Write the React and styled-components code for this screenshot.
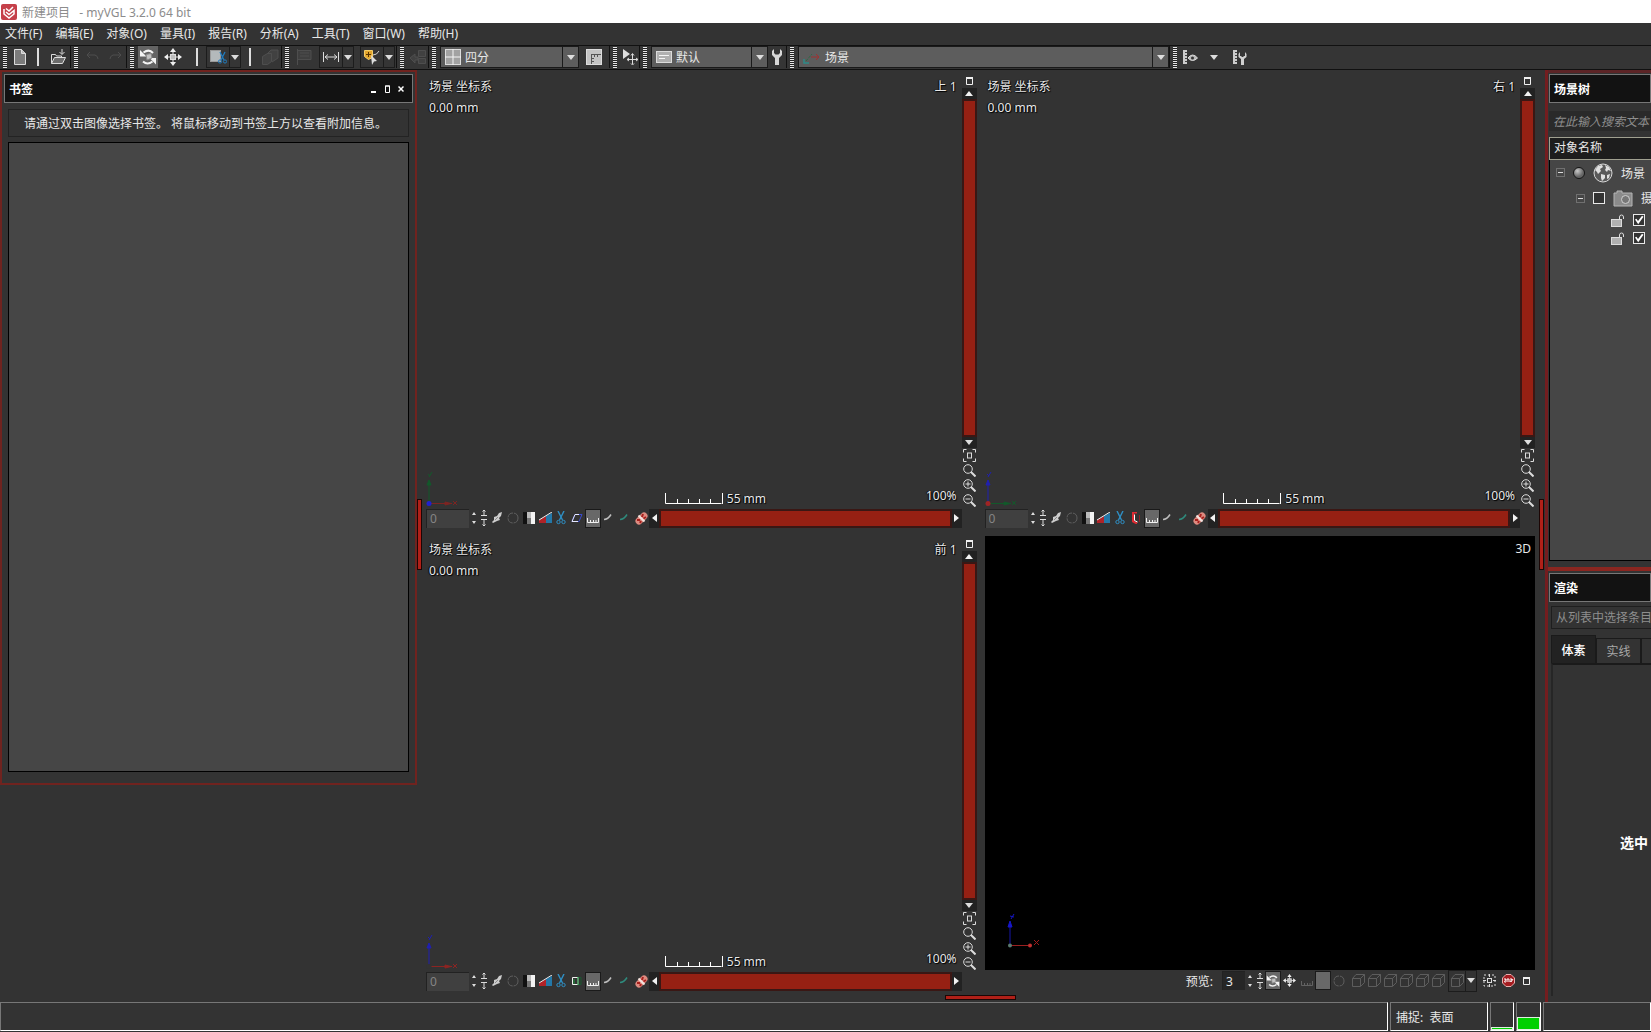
import React from "react";
import styled, { createGlobalStyle } from "styled-components";

const GlobalStyle = createGlobalStyle`
  * {
    box-sizing: border-box;
  }
  body {
    margin: 0;
    background: #333333;
  }
  body, button, input, select {
    font-family: "Noto Sans", "Noto Sans CJK SC", sans-serif;
    font-size: 12px;
    color: #e8e8e8;
  }
  button {
    padding: 0;
    border: 0;
    background: none;
  }
`;

const Page = styled.div`
  height: 100vh;
  display: flex;
  flex-direction: column;
  overflow: hidden;
`;
const TitleBar = styled.header`
  flex: none;
  height: 23px;
  padding-left: 1px;
  display: flex;
  align-items: center;
  gap: 5px;
  background: #ffffff;
  color: #8c8c8c;
  white-space: pre;
`;
const MenuBar = styled.nav`
  flex: none;
  height: 22px;
  padding-left: 5px;
  display: flex;
  align-items: center;
  gap: 13px;
`;
const MenuItem = styled.button`
  line-height: 20px;
`;

/* toolbar */
const ToolBar = styled.div`
  flex: none;
  height: 25px;
  padding-bottom: 1px;
  display: flex;
  border-top: 1px solid #111111;
  border-bottom: 1px solid #111111;
  background: #353535;
`;
const ToolGroup = styled.div`
  display: flex;
  align-items: center;
  padding-right: ${(props) => props.$end || 0}px;
  border-right: ${(props) => (props.$last ? "0" : "1px solid #111111")};
`;
const Grip = styled.span`
  width: 4px;
  height: 21px;
  margin: 0 4px 0 3px;
  background: repeating-linear-gradient(#e6e6e6 0 1px, #222222 1px 2px);
`;
const Separator = styled.span`
  width: 2px;
  height: 18px;
  margin: 0 8px;
  background: #dddddd;
`;
const ToolButton = styled.button`
  width: ${(props) => props.$w || 22}px;
  height: 22px;
  display: flex;
  align-items: center;
  justify-content: center;
  background: ${(props) => (props.$on ? "#646464" : "none")};
  opacity: ${(props) => (props.$dim ? 0.15 : 1)};
`;
const Split = styled.div`
  display: flex;
  margin-left: ${(props) => props.$gap || 0}px;
  border: 1px solid #1c1c1c;
  button + button {
    border-left: 1px solid #1c1c1c;
  }
  button {
    height: 20px;
  }
`;
const ComboBox = styled.label`
  width: ${(props) => props.$w}px;
  height: 22px;
  display: flex;
  align-items: center;
  gap: 4px;
  padding-left: 4px;
  border: 1px solid #1a1a1a;
  background: #5d5d5d;
`;
const ComboSelect = styled.select`
  flex: 1;
  min-width: 0;
  height: 20px;
  padding: 0;
  border: 0;
  outline: 0;
  appearance: none;
  background: none;
`;
const ComboArrow = styled.span`
  width: 16px;
  height: 20px;
  display: flex;
  align-items: center;
  justify-content: center;
  border-left: 1px solid #1a1a1a;
`;

/* docks */
const Body = styled.main`
  flex: 1;
  min-height: 0;
  display: flex;
`;
const LeftDock = styled.aside`
  flex: none;
  width: 417px;
  display: flex;
  flex-direction: column;
`;
const BookmarkPanel = styled.section`
  flex: 0 1 715px;
  min-height: 0;
  padding: 2px;
  display: flex;
  flex-direction: column;
  border: 2px solid #70231f;
`;
const PanelTitle = styled.h2`
  flex: none;
  height: 29px;
  margin: 0;
  padding: 0 4px;
  display: flex;
  align-items: center;
  justify-content: space-between;
  border: 1px solid #777777;
  background: #121212;
  font-size: 12px;
  font-weight: 700;
  color: #ffffff;
  white-space: nowrap;
`;
const PanelButtons = styled.span`
  display: flex;
  margin-bottom: 4px;
  button {
    width: 14px;
    height: 14px;
  }
`;
const Message = styled.p`
  flex: none;
  height: 28px;
  margin: 6px 4px 5px;
  padding-left: 15px;
  border: 1px solid #232323;
  line-height: 28px;
  white-space: pre;
`;
const BookmarkList = styled.div`
  flex: 1;
  margin: 0 4px 9px;
  border: 1px solid #000000;
  background: #464646;
`;
const RightDock = styled.aside`
  flex: none;
  width: 106px;
  display: flex;
  flex-direction: column;
  overflow: hidden;
  border-left: 3px solid #741d1f;
  white-space: nowrap;
`;
const TreePanel = styled.section`
  flex: 0 1 497px;
  padding: 1px 0 0 1px;
  display: flex;
  flex-direction: column;
  border-top: 3px solid #5c2426;
`;
const SearchInput = styled.input`
  flex: none;
  width: 140px;
  height: 20px;
  margin: 8px 0 6px;
  padding: 0 4px;
  border: 0;
  background: #2a2a2a;
  font-style: italic;
  &::placeholder {
    color: #8e8e8e;
  }
`;
const TreeHeader = styled.div`
  flex: none;
  height: 23px;
  padding-left: 4px;
  border: 1px solid #a0a090;
  border-right: 0;
  background: #1d1d1d;
  line-height: 20px;
`;
const Tree = styled.ul`
  flex: 1;
  margin: 0 0 6px;
  padding: 0;
  list-style: none;
  border-left: 1px solid #000000;
  border-bottom: 1px solid #000000;
  background: #464646;
`;
const TreeRow = styled.li`
  height: ${(props) => props.$h}px;
  padding-left: ${(props) => props.$indent}px;
  display: flex;
  align-items: center;
  gap: 8px;
  svg {
    flex: none;
  }
`;
const Expander = styled.button`
  flex: none;
  width: 9px;
  height: 9px;
  border: 1px solid #707070;
  background: linear-gradient(#dddddd, #dddddd) center / 5px 1px no-repeat;
`;
const TreeCheck = styled.input`
  flex: none;
  width: 12px;
  height: 12px;
  margin: 0;
  appearance: none;
  border: 1px solid #e8e8e8;
  background: #333333;
  &:checked::before {
    content: "";
    display: block;
    width: 10px;
    height: 10px;
    background: #ffffff;
    clip-path: polygon(10% 45%, 25% 38%, 40% 60%, 80% 8%, 95% 18%, 42% 92%);
  }
`;
const Orb = styled.span`
  flex: none;
  width: 12px;
  height: 12px;
  border: 1px solid #161616;
  border-radius: 50%;
  background: radial-gradient(circle at 35% 30%, #c8c8c8, #666666 60%);
`;
const RenderPanel = styled.section`
  flex: 1;
  padding: 2px 0 0 1px;
  display: flex;
  flex-direction: column;
  border-top: 4px solid #8a2620;
`;
const RenderInput = styled.input`
  flex: none;
  width: 140px;
  height: 23px;
  margin: 4px 0 6px 2px;
  padding: 0 4px;
  border: 1px solid #1e1e1e;
  background: #333333;
  &::placeholder {
    color: #8e8e8e;
  }
`;
const Tabs = styled.div`
  flex: none;
  height: 28px;
  margin-left: 2px;
  display: flex;
  align-items: flex-end;
`;
const Tab = styled.button`
  flex: none;
  width: 45px;
  height: ${(props) => (props.$active ? 28 : 25)}px;
  border: 1px solid #1a1a1a;
  border-bottom: 0;
  background: ${(props) => (props.$active ? "#222222" : "#333333")};
  color: ${(props) => (props.$active ? "#ffffff" : "#a8a8a8")};
  font-weight: ${(props) => (props.$active ? 500 : 400)};
`;
const TabPage = styled.div`
  flex: 1;
  margin: 0 0 6px 2px;
  padding: 167px 0 0 67px;
  border-top: 2px solid #1a1a1a;
  border-left: 2px solid #262626;
  font-size: 14px;
  font-weight: 700;
  color: #ffffff;
`;

/* splitters */
const Splitter = styled.div`
  flex: none;
  width: ${(props) => props.$w}px;
  padding: 0 ${(props) => props.$right || 0}px 4px 0;
  display: flex;
  align-items: center;
  justify-content: flex-end;
`;
const Handle = styled.span`
  width: 5px;
  height: 71px;
  border: 1px solid #1c0605;
  background: #b02018;
`;
const BottomSplitter = styled.div`
  flex: none;
  height: 7px;
  display: flex;
  justify-content: center;
  span {
    width: 71px;
    height: 5px;
    border: 1px solid #1c0605;
    background: #b02018;
  }
`;

/* viewports */
const Center = styled.div`
  flex: 1;
  min-width: 0;
  padding-top: 3px;
  display: flex;
  flex-direction: column;
`;
const Views = styled.div`
  flex: 1;
  min-height: 0;
  display: grid;
  grid-template-columns: 1fr 1fr;
  grid-template-rows: 1fr 1fr;
  gap: 4px 8px;
`;
const ViewBox = styled.section`
  min-width: 0;
  min-height: 0;
  padding-bottom: 4px;
  display: flex;
  flex-direction: column;
`;
const ViewMain = styled.div`
  flex: 1;
  min-height: 0;
  display: flex;
`;
const Canvas = styled.div`
  flex: 1;
  min-width: 0;
  padding: 3px 5px 0 3px;
  display: flex;
  flex-direction: column;
  justify-content: space-between;
  line-height: 21px;
  text-shadow: 1px 1px 1px #000000, -1px 0 1px #000000;
`;
const LabelRow = styled.div`
  display: flex;
  justify-content: space-between;
`;
const ScaleRow = styled.div`
  display: grid;
  grid-template-columns: 4fr 5fr;
  align-items: end;
  margin-left: -3px;
`;
const ScaleInfo = styled.div`
  padding-left: 3px;
  display: flex;
  align-items: flex-end;
  justify-content: space-between;
  line-height: 18px;
  span {
    display: flex;
    align-items: center;
    gap: 4px;
  }
  output {
    margin-bottom: 3px;
  }
`;
const SideBar = styled.div`
  flex: none;
  width: 15px;
  display: flex;
  flex-direction: column;
`;
const SideButton = styled.button`
  flex: none;
  height: 15px;
  display: flex;
  align-items: center;
  justify-content: center;
`;
const ScrollArrow = styled.button`
  flex: none;
  width: ${(props) => (props.$v ? 15 : 10)}px;
  height: ${(props) => (props.$v ? 11 : 19)}px;
  display: flex;
  align-items: center;
  justify-content: center;
  background: #222222;
`;
const ScrollTrack = styled.div`
  flex: 1;
  padding: 2px;
  display: flex;
  background: #3a1714;
`;
const ScrollThumb = styled.div`
  flex: 1;
  background: #962013;
`;
const ViewTools = styled.div`
  flex: none;
  height: 20px;
  margin-right: 15px;
  display: flex;
  align-items: center;
  ${ScrollTrack} {
    height: 19px;
  }
`;
const SliceInput = styled.input`
  width: ${(props) => props.$w}px;
  height: 19px;
  padding: 0 3px;
  border: 0;
  border-top: 1px solid #222222;
  border-left: 1px solid #222222;
  background: ${(props) => (props.$dark ? "#262626" : "#404040")};
  color: ${(props) => (props.$dark ? "#e8e8e8" : "#858585")};
`;
const MiniButton = styled.button`
  flex: none;
  width: ${(props) => props.$w || 16}px;
  height: 19px;
  margin-left: ${(props) => props.$gap || 0}px;
  display: flex;
  align-items: center;
  justify-content: center;
  border: ${(props) => (props.$on ? "1px solid #1a1a1a" : "0")};
  background: ${(props) => (props.$on ? "#686868" : "none")};
  opacity: ${(props) => (props.$dim ? 0.25 : 1)};
`;
const View3D = styled.div`
  flex: 1;
  min-height: 0;
  padding: 2px 4px 14px 20px;
  display: flex;
  flex-direction: column;
  justify-content: space-between;
  background: #000000;
  line-height: 21px;
  text-align: right;
`;
const ViewTools3D = styled.div`
  flex: none;
  height: 21px;
  display: flex;
  align-items: center;
  justify-content: flex-end;
  label {
    margin-right: 9px;
  }
`;

/* status bar */
const StatusBar = styled.footer`
  flex: none;
  height: 30px;
  padding-bottom: 1px;
  display: flex;
  gap: 2px;
`;
const StatusCell = styled.div`
  flex: ${(props) => (props.$w ? "none" : 1)};
  width: ${(props) => (props.$w ? props.$w + "px" : "auto")};
  padding-left: ${(props) => (props.$text ? 5 : 0)}px;
  display: flex;
  align-items: ${(props) => (props.$text ? "center" : "flex-end")};
  border: 1px solid #777777;
  border-right: 1px solid #ffffff;
  border-bottom: 1px solid #ffffff;
  white-space: pre;
`;
const Meter = styled.div`
  flex: 1;
  height: ${(props) => props.$h}px;
  border: 1px solid #e0f0e0;
  background: #00d000;
`;

const Svg = ({ w = 16, h = 16, box, children }) => (
  <svg width={w} height={h} viewBox={box || `0 0 ${w} ${h}`} fill="none" stroke="#dcdcdc">
    {children}
  </svg>
);

const DownArrow = () => (
  <Svg w={8} h={5}>
    <path d="M0 0h8L4 5z" fill="#dddddd" stroke="none" />
  </Svg>
);
const UpArrow = () => (
  <Svg w={8} h={5}>
    <path d="M0 5h8L4 0z" fill="#f2f2f2" stroke="none" />
  </Svg>
);
const LeftArrow = () => (
  <Svg w={5} h={8}>
    <path d="M5 0v8L0 4z" fill="#f2f2f2" stroke="none" />
  </Svg>
);
const RightArrow = () => (
  <Svg w={5} h={8}>
    <path d="M0 0v8l5-4z" fill="#f2f2f2" stroke="none" />
  </Svg>
);
const LogoIcon = () => (
  <Svg>
    <rect x="0" y="0" width="16" height="16" rx="2" fill="#c5404a" stroke="none" />
    <path d="M3 5v5l5 4 5-4V6.500L8 10.500 5 8" stroke="#ffffff" strokeWidth="1.500" />
    <path d="M5 4.500L8 7l4-4" stroke="#ffffff" strokeWidth="1.500" />
  </Svg>
);
const NewIcon = () => (
  <Svg>
    <path d="M2.500 .5h7l4 4v11h-11z" fill="#7c7c7c" />
    <path d="M9.500 .5v4h4" fill="#bbbbbb" />
  </Svg>
);
const OpenIcon = () => (
  <Svg>
    <path d="M1.500 14.500v-9h4l1 1.500h5v2" />
    <path d="M1.500 14.500l3-6h11l-3 6z" fill="#6d6d6d" />
    <path d="M12 0v5M9.500 3L12 5.500 14.500 3" />
  </Svg>
);
const UndoIcon = () => (
  <Svg>
    <path d="M2 6h8q3 1 3 4M5 3L2 6l3 3" />
  </Svg>
);
const RedoIcon = () => (
  <Svg>
    <path d="M14 6H6q-3 1-3 4M11 3l3 3-3 3" />
  </Svg>
);
const RotateIcon = ({ s = 18 }) => (
  <Svg w={s} h={s} box="0 0 18 18">
    <path d="M14 5Q10 .5 4.500 4.500" strokeWidth="2" stroke="#f4f4f4" />
    <path d="M1 2v6.500h6.500z" fill="#f4f4f4" stroke="none" />
    <path d="M4 13.500q4.500 4 9.500 0" strokeWidth="2" stroke="#f4f4f4" />
    <path d="M17 16.500V10h-6.500z" fill="#f4f4f4" stroke="none" />
    <path d="M7 6.500l5-1 1 4.500-5 2z" fill="#c4c4c4" stroke="#8a8a8a" />
  </Svg>
);
const MoveIcon = ({ s = 18 }) => (
  <Svg w={s} h={s} box="0 0 18 18">
    <path d="M9 3v12M3 9h12" stroke="#f0f0f0" />
    <path d="M9 0l3 4H6zM9 18l3-4H6zM0 9l4-3v6zM18 9l-4-3v6z" fill="#f0f0f0" stroke="none" />
    <rect x="6.500" y="6.500" width="5" height="5" fill="#bdbdbd" />
  </Svg>
);
const Scissors = () => (
  <Svg w={10} h={14}>
    <path d="M2 0l4.500 9M8 0L3.500 9" stroke="#2f8fc4" strokeWidth="1.400" />
    <circle cx="2.500" cy="11" r="1.700" stroke="#2f8fc4" />
    <circle cx="7.500" cy="11" r="1.700" stroke="#2f8fc4" />
  </Svg>
);
const CutViewIcon = () => (
  <Svg w={18} h={18}>
    <rect x="1.500" y="2.500" width="10" height="11" fill="#b4b9bb" stroke="#9a9a9a" />
    <path d="M11 4l4 8M16 4l-4 8" stroke="#1f7cc0" strokeWidth="1.300" />
    <circle cx="11" cy="13.500" r="1.600" stroke="#1f7cc0" />
    <circle cx="16" cy="13.500" r="1.600" stroke="#1f7cc0" />
  </Svg>
);
const BoxIcon = () => (
  <Svg w={18}>
    <path d="M1.500 7.500l5-3h4v8l-4 3h-5zM6 5l4-4h7v8l-6 4" fill="#888888" />
  </Svg>
);
const FlagIcon = () => (
  <Svg>
    <path d="M1.500 0v16M2 1.500h13v9H2M4 4h9M4 7h9" fill="#777777" />
  </Svg>
);
const MeasureIcon = () => (
  <Svg w={18}>
    <path d="M1.500 3v10M16.500 3v10M3 8h12M6 5.500L3 8l3 2.500M12 5.500L15 8l-3 2.500" />
  </Svg>
);
const ProbeIcon = () => (
  <Svg w={18}>
    <path d="M1.500 1.500h8v7l-4 2-4-3z" fill="#e2a52d" stroke="#f4cf6a" />
    <path d="M5.500 3v5M3 5.500h5" stroke="#553300" />
    <path d="M10 6q4 0 6-4" stroke="#d0d0d0" />
    <path d="M8 6l6 6-3 .5L9 16z" fill="#dddddd" stroke="none" />
  </Svg>
);
const LinkIcon = () => (
  <Svg w={18}>
    <path d="M9.500 1.500h7v6h-7zM1 9l5-4v3h3v3H6v3zM9.500 9.500h7v5h-7z" fill="#888888" />
  </Svg>
);
const QuadIcon = () => (
  <Svg>
    <rect x=".5" y=".5" width="15" height="15" fill="#a2a2a2" />
    <path d="M8 0v16M0 8h16" stroke="#f4f4f4" />
  </Svg>
);
const LayoutIcon = () => (
  <Svg>
    <rect x=".5" y=".5" width="15" height="15" fill="#c4c4c4" />
    <path d="M5.500 5v10M5 5.500h10M8.500 6v2M11.500 6v2M6 9.500h2M6 12.500h2" stroke="#555555" />
  </Svg>
);
const CursorMoveIcon = () => (
  <Svg>
    <path d="M1 0v10l7-5z" fill="#dddddd" stroke="none" />
    <path d="M10.500 5v10M5.500 10.500h10M9 6.500l1.500-2 1.500 2M9 14.500l1.500 1.500 1.500-1.500M7 9l-2 1.500L7 12M14 9l2 1.500-2 1.500" />
  </Svg>
);
const CardIcon = () => (
  <Svg h={12}>
    <rect x=".5" y=".5" width="15" height="11" fill="#b0b0b0" />
    <path d="M3 4.500h10M3 7.500h6" stroke="#f4f4f4" />
  </Svg>
);
const WrenchIcon = () => (
  <Svg w={12}>
    <path d="M3 0L1 2v4l3 3v7h4V9l3-3V2L9 0v4L7.500 5.500h-3L3 4z" fill="#d8d8d8" stroke="none" />
  </Svg>
);
const SceneAxisIcon = () => (
  <Svg w={18}>
    <path d="M3 12l6-7" stroke="#2c6b45" strokeDasharray="3 1" />
    <path d="M1 10v4h5" stroke="#2d8b88" strokeWidth="1.500" />
    <path d="M8 8h8M13 5l3 3-3 3" stroke="#a03030" />
  </Svg>
);
const RulerEyeIcon = ({ wrench }) => (
  <Svg>
    <path d="M1 1h4v14H1z" fill="#cccccc" stroke="none" />
    <path d="M3 3.500h2M3 6.500h2M3 9.500h2M3 12.500h2" stroke="#444444" />
    {wrench ? (
      <path d="M8 3L6.500 5v3L9 10v6h3v-6l2.500-2V5L13 3v4h-1.500v1h-2V7H8z" fill="#d0d0d0" stroke="none" />
    ) : (
      <>
        <path d="M6 9q4.500-6 9.500 0-5 5-9.500 0z" fill="#b8b8b8" />
        <circle cx="10.500" cy="9" r="1.500" fill="#333333" stroke="none" />
      </>
    )}
  </Svg>
);
const RestoreIcon = () => (
  <Svg w={7} h={8}>
    <path d="M.5 1h6v6.500h-6z" stroke="#f0f0f0" />
    <path d="M0 1h7" strokeWidth="2" stroke="#f0f0f0" />
  </Svg>
);
const FitIcon = () => (
  <Svg w={13} h={13}>
    <path d="M.5 3.500v-3h3M9.500 .5h3v3M12.500 9.500v3h-3M3.500 12.500h-3v-3" />
    <rect x="4.500" y="4" width="4" height="5" />
  </Svg>
);
const ZoomIcon = ({ sign }) => (
  <Svg w={13} h={13}>
    <circle cx="5" cy="5" r="4.300" />
    <path d="M8 8l4.500 4.500" strokeWidth="2" />
    {sign && <path d={sign === "+" ? "M5 2.500v5M2.500 5h5" : "M2.500 5h5"} />}
  </Svg>
);
const SpinIcon = () => (
  <Svg w={6} h={14}>
    <path d="M1 4h4L3 1zM1 10h4l-2 3z" fill="#dddddd" stroke="none" />
  </Svg>
);
const SliderIcon = () => (
  <Svg w={8} h={18}>
    <path d="M4 1v6M4 10v7M1 6.500h6M1 10.500h6M2.500 2.500L4 1l1.500 1.500M2.500 15.500L4 17l1.500-1.500" />
  </Svg>
);
const PenIcon = () => (
  <Svg w={10} h={12}>
    <path d="M0 10l2-2V5l3-1 2-3 3-1-1 4-2 2 1 2-3 1-4 2z" fill="#cccccc" stroke="none" />
    <path d="M3 8l3-3" stroke="#8a8a8a" />
  </Svg>
);
const CircleIcon = () => (
  <Svg w={12} h={12}>
    <circle cx="6" cy="6" r="5" strokeDasharray="7 1" />
  </Svg>
);
const GradientIcon = () => (
  <Svg w={12} h={12}>
    <path d="M0 0h4v12H0z" fill="#111111" stroke="none" />
    <path d="M4 0h4v6H4z" fill="#bbbbbb" stroke="none" />
    <path d="M4 6h4v6H4z" fill="#777777" stroke="none" />
    <path d="M8 0h4v12H8z" fill="#f4f4f4" stroke="none" />
  </Svg>
);
const RampIcon = () => (
  <Svg w={13} h={12}>
    <path d="M0 8l7-4v7H0z" fill="#b02328" stroke="none" />
    <path d="M7 4l6-3v10H7z" fill="#2478a8" stroke="none" />
    <path d="M0 8L13 0" stroke="#f0f0f0" />
  </Svg>
);
const PlaneIcon = ({ kind }) => (
  <Svg w={12} h={12}>
    {kind === "top" && <path d="M1 9.500L4 2.500h7L8 9.500z" stroke="#3b4bd0" />}
    {kind === "top" && <path d="M7 9.500H1L4 2.500h4" stroke="#e4e6ff" />}
    {kind === "right" && <path d="M7 .5H3v9l4 2" stroke="#e02a32" strokeWidth="2" />}
    {kind === "right" && <path d="M4.500 2.500v6l3 1.500" stroke="#ffffff" />}
    {kind === "right" && <path d="M9.500 3v7" stroke="#8a2024" />}
    {kind === "front" && <path d="M7 2.500h3v7H7" stroke="#1b5a30" />}
    {kind === "front" && <path d="M7 2.500H1.500v7H7z" stroke="#f0f0f0" />}
    {kind === "front" && <path d="M3 4v5M7 2v8" stroke="#1b9a3c" />}
  </Svg>
);
const RulerIcon = () => (
  <Svg w={12} h={12}>
    <path d="M.5 6v4.500h11V6M3.500 8v2M6.500 8v2M9 8v2" stroke="#f0f0f0" />
  </Svg>
);
const CurveIcon = ({ color }) => (
  <Svg w={14} h={14}>
    <path d="M2 8.500q4 0 7-5" stroke={color} strokeWidth="1.500" />
  </Svg>
);
const PillsIcon = () => (
  <Svg w={13} h={13}>
    <path d="M4 9l5-5" stroke="#dd8a80" strokeWidth="7" strokeLinecap="round" />
    <path d="M3.500 3.500l6 6" stroke="#f4e4e0" strokeWidth="2" />
    <path d="M2 8h3M5 11l1-2M8 2l-1 3M8.500 6.500L11 5" stroke="#a8201c" strokeWidth="2" />
  </Svg>
);
const CubeIcon = () => (
  <Svg w={13} h={13}>
    <path d="M.5 4.500h8v8h-8zM4 .5h8.500v8L9 12M.5 4.500L4 .5M8.500 4.500l4-4" />
  </Svg>
);
const DottedIcon = () => (
  <Svg w={13} h={13}>
    <rect x="1" y="1" width="11" height="11" strokeDasharray="2 2" />
    <rect x="4.500" y="4.500" width="4" height="4" />
    <path d="M6.500 0v3M6.500 10v3M0 6.500h3M10 6.500h3" />
  </Svg>
);
const StopIcon = () => (
  <Svg w={13} h={13}>
    <path d="M4 .5h5L12.500 4v5L9 12.500H4L.5 9V4z" fill="#a51c20" stroke="#e8b0b0" />
    <path d="M2 5h2L2.500 8H4M5 8V5h2v3M8 5h2l-2 3M11 5L9 8" stroke="#ffffff" />
  </Svg>
);
const GlobeIcon = () => (
  <Svg w={20} h={20}>
    <circle cx="10" cy="10" r="9" fill="#5a5a5a" stroke="#d8d8d8" />
    <path d="M2 7l3-4 4-1 1 2-3 2 1 2-3 3-1-2zM12 2l4 2 2 4-3-1-1 2-2-2 1-2zM8 11l4 1v3l-3 3-1-3zM14 12l3-1-1 4-2 1z" fill="#e0e0e0" stroke="none" />
  </Svg>
);
const CameraIcon = () => (
  <Svg w={20} h={17}>
    <path d="M1 3h3V1h5v2h10v13H1z" fill="#8b8b8b" stroke="#b5b5b5" />
    <circle cx="12.500" cy="9.500" r="4" fill="#777777" stroke="#d0d0d0" />
  </Svg>
);
const LockIcon = () => (
  <Svg w={14} h={13}>
    <rect x=".5" y="5.500" width="10" height="7" fill="#b0b0b0" />
    <path d="M8.500 5V3q0-2 2-2t2 2v2" />
  </Svg>
);
const MinimizeIcon = () => (
  <Svg w={5} h={8}>
    <path d="M0 7h5" strokeWidth="2" stroke="#ffffff" />
  </Svg>
);
const FloatIcon = () => (
  <Svg w={5} h={8}>
    <path d="M.5 1h4v6.500h-4zM0 1h5" stroke="#ffffff" />
  </Svg>
);
const CloseIcon = () => (
  <Svg w={6} h={8}>
    <path d="M.5 1.500l5 5M5.500 1.500l-5 5" stroke="#ffffff" strokeWidth="1.500" />
  </Svg>
);

const AxisMark = ({ up, right, origin }) => (
  <Svg w={34} h={38}>
    <path d="M3 33V11" stroke={up} />
    <path d="M1 15h4L3 10zM3 7l3-5M2 4l2 2" fill={up} stroke={up} />
    <path d="M4 33.500h22" stroke={right} />
    <path d="M19 32v3l6-1.500zM27 31l4 4M31 31l-4 4" fill={right} stroke={right} />
    <circle cx="3" cy="33.500" r="2.500" fill={origin} stroke="none" />
  </Svg>
);
const Axis3D = () => (
  <Svg w={40} h={44}>
    <path d="M5 34V12" stroke="#1616a8" />
    <path d="M3 15h4L5 9zM6 7l3-5M5 4l4 1" fill="#1616c8" stroke="#1616c8" />
    <path d="M5 33.500h18" stroke="#9c2020" />
    <circle cx="25" cy="33.500" r="2" fill="#c43030" stroke="none" />
    <path d="M29 28l5 5M34 28l-5 5" stroke="#a01c1c" />
    <circle cx="5" cy="33.500" r="2" fill="#5a7a70" stroke="none" />
  </Svg>
);
const ScaleBar = () => (
  <Svg w={58} h={12}>
    <path d="M.5 0v10.500h56M12.500 6v4M23.500 6v4M34.500 6v4M45.500 6v4M57.500 0v11" stroke="#ffffff" />
  </Svg>
);

const MENUS = [
  "文件(F)",
  "编辑(E)",
  "对象(O)",
  "量具(I)",
  "报告(R)",
  "分析(A)",
  "工具(T)",
  "窗口(W)",
  "帮助(H)",
];

function Combo({ w, label, icon, value }) {
  return (
    <ComboBox $w={w}>
      {icon}
      <ComboSelect aria-label={label} defaultValue={value}>
        <option>{value}</option>
      </ComboSelect>
      <ComboArrow>
        <DownArrow />
      </ComboArrow>
    </ComboBox>
  );
}

function SliceView({ name, kind, axis }) {
  return (
    <ViewBox>
      <ViewMain>
        <Canvas>
          <div>
            <LabelRow>
              <span>场景 坐标系</span>
              <span>{name}</span>
            </LabelRow>
            <div>0.00 mm</div>
          </div>
          <ScaleRow>
            <AxisMark {...axis} />
            <ScaleInfo>
              <span>
                <ScaleBar />
                55 mm
              </span>
              <output>100%</output>
            </ScaleInfo>
          </ScaleRow>
        </Canvas>
        <SideBar>
          <SideButton aria-label="最大化"><RestoreIcon /></SideButton>
          <ScrollArrow $v aria-label="向上"><UpArrow /></ScrollArrow>
          <ScrollTrack><ScrollThumb /></ScrollTrack>
          <ScrollArrow $v aria-label="向下"><DownArrow /></ScrollArrow>
          <SideButton aria-label="适合"><FitIcon /></SideButton>
          <SideButton aria-label="缩放"><ZoomIcon /></SideButton>
          <SideButton aria-label="放大"><ZoomIcon sign="+" /></SideButton>
          <SideButton aria-label="缩小"><ZoomIcon sign="-" /></SideButton>
        </SideBar>
      </ViewMain>
      <ViewTools>
        <SliceInput $w={43} aria-label="切片" defaultValue="0" />
        <MiniButton $w={10} aria-label="步进"><SpinIcon /></MiniButton>
        <MiniButton $w={10} aria-label="滑块"><SliderIcon /></MiniButton>
        <MiniButton aria-label="笔"><PenIcon /></MiniButton>
        <MiniButton $dim aria-label="圆"><CircleIcon /></MiniButton>
        <MiniButton aria-label="灰度"><GradientIcon /></MiniButton>
        <MiniButton aria-label="色阶"><RampIcon /></MiniButton>
        <MiniButton aria-label="剪切"><Scissors /></MiniButton>
        <MiniButton aria-label="平面"><PlaneIcon kind={kind} /></MiniButton>
        <MiniButton $on aria-label="标尺"><RulerIcon /></MiniButton>
        <MiniButton aria-label="曲线"><CurveIcon color="#bdbdbd" /></MiniButton>
        <MiniButton aria-label="轮廓"><CurveIcon color="#2f8a7c" /></MiniButton>
        <MiniButton aria-label="标记"><PillsIcon /></MiniButton>
        <ScrollArrow aria-label="向左"><LeftArrow /></ScrollArrow>
        <ScrollTrack><ScrollThumb /></ScrollTrack>
        <ScrollArrow aria-label="向右"><RightArrow /></ScrollArrow>
      </ViewTools>
    </ViewBox>
  );
}

function Preview3D() {
  return (
    <ViewBox>
      <View3D>
        <span>3D</span>
        <Axis3D />
      </View3D>
      <ViewTools3D>
        <label htmlFor="preview">预览:</label>
        <SliceInput id="preview" $dark $w={23} defaultValue="3" />
        <MiniButton $w={10} aria-label="步进"><SpinIcon /></MiniButton>
        <MiniButton $w={10} aria-label="滑块"><SliderIcon /></MiniButton>
        <MiniButton $on aria-label="旋转"><RotateIcon s={14} /></MiniButton>
        <MiniButton aria-label="移动"><MoveIcon s={13} /></MiniButton>
        <MiniButton $dim $gap={2} aria-label="标尺"><RulerIcon /></MiniButton>
        <MiniButton $on aria-label="背景" />
        <MiniButton $dim aria-label="光照"><CircleIcon /></MiniButton>
        {["前", "后", "左", "右", "上", "下"].map((side, i) => (
          <MiniButton key={side} $dim $gap={i === 0 ? 3 : 0} aria-label={side}>
            <CubeIcon />
          </MiniButton>
        ))}
        <Split $gap={2}>
          <MiniButton $dim aria-label="视图"><CubeIcon /></MiniButton>
          <MiniButton $w={11} aria-label="更多"><DownArrow /></MiniButton>
        </Split>
        <MiniButton $w={19} $gap={3} aria-label="范围"><DottedIcon /></MiniButton>
        <MiniButton $w={19} aria-label="停止"><StopIcon /></MiniButton>
        <MiniButton $w={17} aria-label="最大化"><RestoreIcon /></MiniButton>
      </ViewTools3D>
    </ViewBox>
  );
}

function MainToolBar() {
  return (
    <ToolBar>
      <ToolGroup $end={1}>
        <Grip />
        <ToolButton $w={18} aria-label="新建"><NewIcon /></ToolButton>
        <Separator />
        <ToolButton aria-label="打开"><OpenIcon /></ToolButton>
      </ToolGroup>
      <ToolGroup>
        <Grip />
        <ToolButton $dim aria-label="撤销"><UndoIcon /></ToolButton>
        <ToolButton $dim aria-label="重做"><RedoIcon /></ToolButton>
      </ToolGroup>
      <ToolGroup>
        <Grip />
        <ToolButton $on $w={20} aria-label="旋转"><RotateIcon /></ToolButton>
        <ToolButton $w={30} aria-label="移动"><MoveIcon /></ToolButton>
        <Separator />
        <Split>
          <ToolButton aria-label="裁剪"><CutViewIcon /></ToolButton>
          <ToolButton $w={11} aria-label="裁剪选项"><DownArrow /></ToolButton>
        </Split>
        <Separator />
        <ToolButton $dim aria-label="盒"><BoxIcon /></ToolButton>
      </ToolGroup>
      <ToolGroup $end={1}>
        <Grip />
        <ToolButton $dim aria-label="注释"><FlagIcon /></ToolButton>
        <Split $gap={4}>
          <ToolButton aria-label="距离"><MeasureIcon /></ToolButton>
          <ToolButton $w={11} aria-label="距离选项"><DownArrow /></ToolButton>
        </Split>
        <Split $gap={6}>
          <ToolButton aria-label="探针"><ProbeIcon /></ToolButton>
          <ToolButton $w={11} aria-label="探针选项"><DownArrow /></ToolButton>
        </Split>
      </ToolGroup>
      <ToolGroup>
        <Grip />
        <ToolButton $dim $w={20} aria-label="链接"><LinkIcon /></ToolButton>
      </ToolGroup>
      <ToolGroup>
        <Grip />
        <Combo w={139} label="布局" icon={<QuadIcon />} value="四分" />
        <ToolButton $w={30} aria-label="编辑布局"><LayoutIcon /></ToolButton>
      </ToolGroup>
      <ToolGroup>
        <Grip />
        <ToolButton $w={18} aria-label="选择"><CursorMoveIcon /></ToolButton>
      </ToolGroup>
      <ToolGroup>
        <Grip />
        <Combo w={117} label="预设" icon={<CardIcon />} value="默认" />
        <ToolButton $w={18} aria-label="设置"><WrenchIcon /></ToolButton>
      </ToolGroup>
      <ToolGroup>
        <Grip />
        <Combo w={371} label="坐标系" icon={<SceneAxisIcon />} value="场景" />
      </ToolGroup>
      <ToolGroup $last>
        <Grip />
        <ToolButton $w={18} aria-label="显示标尺"><RulerEyeIcon /></ToolButton>
        <ToolButton $w={30} aria-label="标尺选项"><DownArrow /></ToolButton>
        <ToolButton aria-label="标尺设置"><RulerEyeIcon wrench /></ToolButton>
      </ToolGroup>
    </ToolBar>
  );
}

function App() {
  return (
    <Page>
      <GlobalStyle />
      <TitleBar>
        <LogoIcon />
        <span>新建项目   - myVGL 3.2.0 64 bit</span>
      </TitleBar>
      <MenuBar>
        {MENUS.map((menu) => (
          <MenuItem key={menu}>{menu}</MenuItem>
        ))}
      </MenuBar>
      <MainToolBar />

      <Body>
        <LeftDock>
          <BookmarkPanel>
            <PanelTitle>
              书签
              <PanelButtons>
                <button aria-label="最小化"><MinimizeIcon /></button>
                <button aria-label="浮动"><FloatIcon /></button>
                <button aria-label="关闭"><CloseIcon /></button>
              </PanelButtons>
            </PanelTitle>
            <Message>请通过双击图像选择书签。 将鼠标移动到书签上方以查看附加信息。</Message>
            <BookmarkList />
          </BookmarkPanel>
        </LeftDock>
        <Splitter $w={9} $right={4}>
          <Handle />
        </Splitter>

        <Center>
          <Views>
            <SliceView
              name="上 1"
              kind="top"
              axis={{ up: "#12592a", right: "#7d2422", origin: "#2020d0" }}
            />
            <SliceView
              name="右 1"
              kind="right"
              axis={{ up: "#2020b0", right: "#12592a", origin: "#a02424" }}
            />
            <SliceView
              name="前 1"
              kind="front"
              axis={{ up: "#2020b0", right: "#8d2422", origin: "#333333" }}
            />
            <Preview3D />
          </Views>
          <BottomSplitter>
            <span />
          </BottomSplitter>
        </Center>

        <Splitter $w={10} $right={1}>
          <Handle />
        </Splitter>
        <RightDock>
          <TreePanel>
            <PanelTitle>场景树</PanelTitle>
            <SearchInput aria-label="搜索" placeholder="在此输入搜索文本" />
            <TreeHeader>对象名称</TreeHeader>
            <Tree>
              <TreeRow $h={25} $indent={6}>
                <Expander aria-label="折叠场景" />
                <Orb />
                <GlobeIcon />
                场景
              </TreeRow>
              <TreeRow $h={26} $indent={26}>
                <Expander aria-label="折叠摄像机" />
                <TreeCheck type="checkbox" aria-label="摄像机" />
                <CameraIcon />
                摄
              </TreeRow>
              <TreeRow $h={18} $indent={61}>
                <LockIcon />
                <TreeCheck type="checkbox" aria-label="光源 1" defaultChecked />
              </TreeRow>
              <TreeRow $h={18} $indent={61}>
                <LockIcon />
                <TreeCheck type="checkbox" aria-label="光源 2" defaultChecked />
              </TreeRow>
            </Tree>
          </TreePanel>
          <RenderPanel>
            <PanelTitle>渲染</PanelTitle>
            <RenderInput aria-label="渲染条目" placeholder="从列表中选择条目" />
            <Tabs>
              <Tab $active>体素</Tab>
              <Tab>实线</Tab>
              <Tab aria-label="更多" />
            </Tabs>
            <TabPage>选中</TabPage>
          </RenderPanel>
        </RightDock>
      </Body>

      <StatusBar>
        <StatusCell />
        <StatusCell $w={98} $text>捕捉:  表面</StatusCell>
        <StatusCell $w={24}>
          <Meter $h={3} />
        </StatusCell>
        <StatusCell $w={25}>
          <Meter $h={13} />
        </StatusCell>
        <StatusCell $w={108} />
      </StatusBar>
    </Page>
  );
}

export default App;
